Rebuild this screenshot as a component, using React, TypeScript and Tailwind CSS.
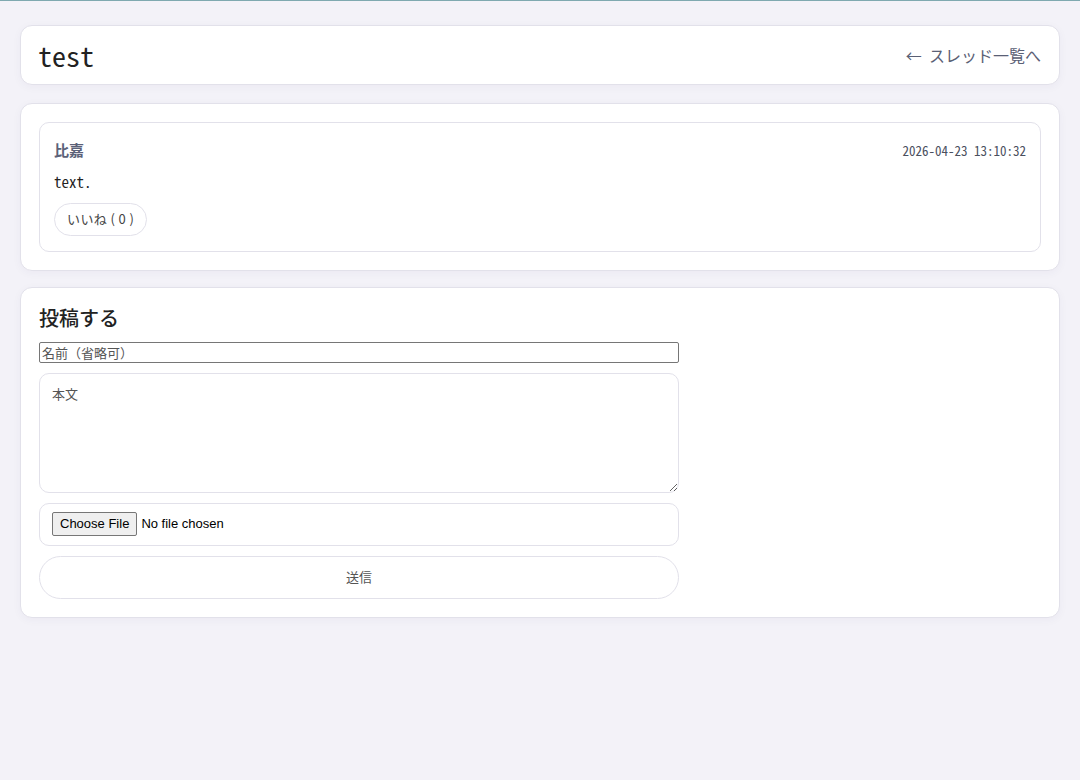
import React from 'react';

const mono = "font-['Noto_Sans_Mono_CJK_JP','DejaVu_Sans_Mono',monospace]";

export default function App() {
  return (
    <div className="min-h-[780px] bg-[#f3f2f8] border-t border-[#7fa9b0] font-['Noto_Sans_CJK_JP','Noto_Sans',sans-serif] text-[#222]">
      <div className="flex flex-col px-5 pt-6 pb-10">
        {/* ヘッダー */}
        <div className="flex items-center justify-between h-[60px] pl-[17px] pr-[18px] bg-white border border-[#e2e1ea] rounded-xl shadow-[0_2px_10px_rgba(40,30,90,0.04)]">
          <h1 className={`${mono} text-[28px] leading-none text-[#222]`}>test</h1>
          <a className="text-[16px] text-[#5a6075]">←&nbsp; スレッド一覧へ</a>
        </div>

        {/* 投稿一覧 */}
        <div className="mt-[18px] p-[18px] bg-white border border-[#e2e1ea] rounded-xl shadow-[0_2px_10px_rgba(40,30,90,0.04)]">
          <div className="px-[14px] pt-[16px] pb-[15px] border border-[#e2e1ea] rounded-[10px]">
            <div className="flex items-center justify-between">
              <span className={`${mono} text-[15px] font-bold text-[#5b6178]`}>比嘉</span>
              <span className={`${mono} text-[13px] text-[#4a4f5e]`}>2026-04-23 13:10:32</span>
            </div>
            <p className={`${mono} mt-[9px] text-[15px] leading-[22px] text-[#222]`}>text.</p>
            <button className="mt-[10px] h-[33px] px-[12px] border border-[#e2e1ea] rounded-full text-[13px] tracking-[0.4px] text-[#444]">
              いいね&nbsp;(&nbsp;0&nbsp;)
            </button>
          </div>
        </div>

        {/* 投稿フォーム */}
        <div className="mt-[16px] p-[18px] bg-white border border-[#e2e1ea] rounded-xl shadow-[0_2px_10px_rgba(40,30,90,0.04)]">
          <h2 className="text-[20px] leading-[24px] font-medium text-[#222]">投稿する</h2>
          <div className="flex flex-col gap-[10px] w-[640px] mt-[12px]">
            <input
              placeholder="名前（省略可）"
              className="h-[21px] px-[2px] border border-[#767676] rounded-[2px] text-[13px] placeholder:text-[#555]"
            />
            <textarea
              placeholder="本文"
              className="h-[120px] px-[12px] pt-[10px] pb-[12px] border border-[#e2e1ea] rounded-[10px] text-[13px] placeholder:text-[#555]"
            />
            <div className="flex items-center h-[43px] px-[12px] border border-[#e2e1ea] rounded-[10px]">
              <input
                type="file"
                className="text-[13px] font-['Liberation_Sans',sans-serif] text-black file:mr-[4px] file:px-[7px] file:py-[1px] file:border file:border-[#767676] file:rounded-[2px] file:bg-[#efefef] file:text-black"
              />
            </div>
            <button className="h-[43px] border border-[#e2e1ea] rounded-full text-[13px] text-[#555]">送信</button>
          </div>
        </div>
      </div>
    </div>
  );
}
